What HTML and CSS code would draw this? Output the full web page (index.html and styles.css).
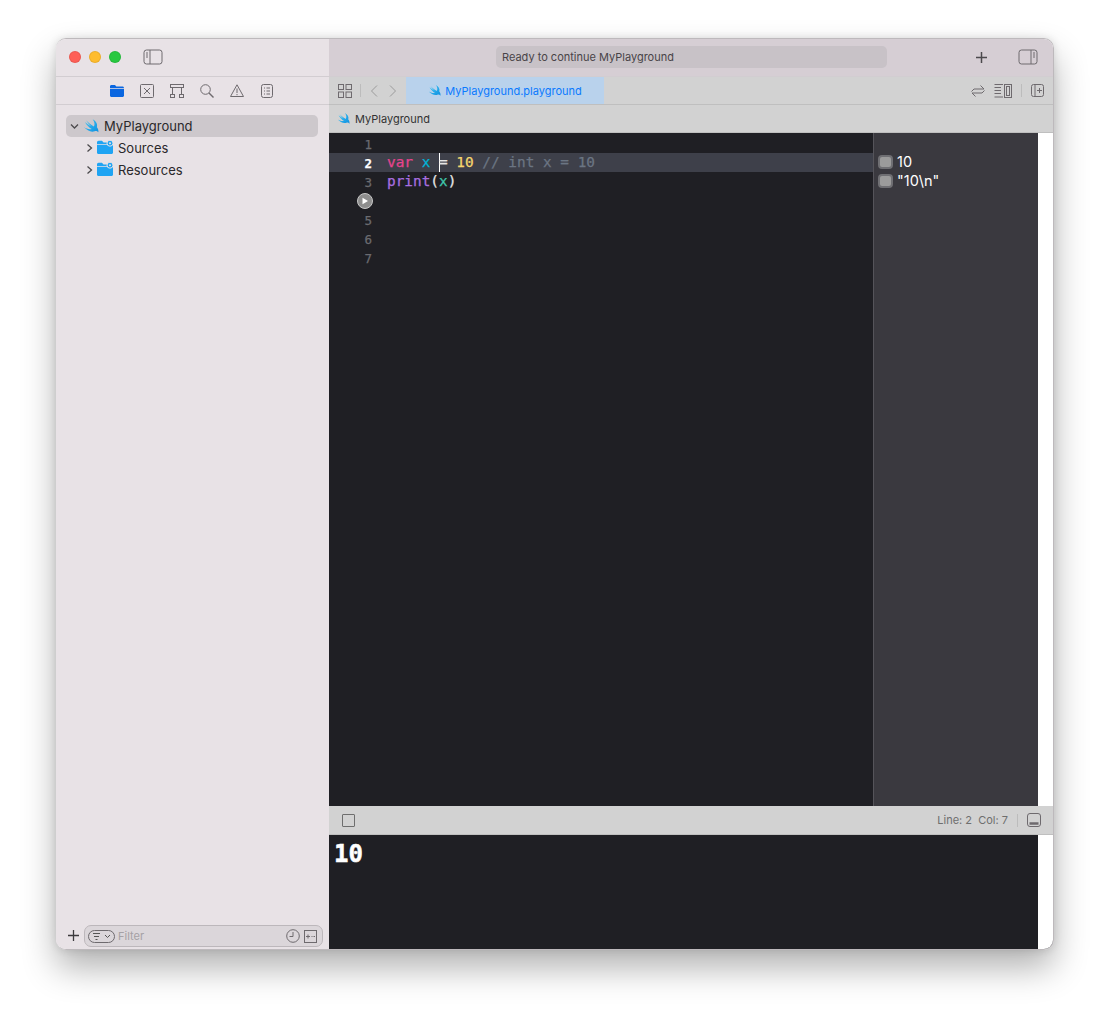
FILE: index.html
```html
<!DOCTYPE html>
<html lang="en">

<head>
    <meta charset="UTF-8">
    <meta name="viewport" content="width=device-width, initial-scale=1.0">
    <title>MyPlayground</title>
    <link rel="stylesheet" href="styles.css">
</head>

<body>
    <svg class="defs" width="0" height="0">
        <defs>
            <linearGradient id="swiftGrad" x1="0" y1="0" x2="1" y2="1">
                <stop offset="0" stop-color="#3fc8f5"></stop>
                <stop offset="1" stop-color="#0f8fe0"></stop>
            </linearGradient>
            <symbol id="swift" viewBox="0 0 24 24">
                <path fill="url(#swiftGrad)" d="M1 13.5C6 18.5 12 22 17.500 19.800C19.500 19 21.500 19.800 23 21.500C23.500 18.500 22.500 15.800 20.800 14C22.300 9 19.500 4.500 14.500 2C17.500 6 18 10 16.300 12.800C12.500 10.500 8 7 4.500 3.500C6.800 7 9.300 9.800 12 12.300C8.800 10.500 5.500 8.300 2.800 6C5.500 10.500 9 14.300 13 16.500C9 17.500 5 16 1 13.500Z"></path>
            </symbol>
            <symbol id="folder" viewBox="0 0 16 14">
                <path fill="#1fa4f3" d="M0 2.500C0 1.500.7.800 1.600.8H5L6.500 2.500H15C15.600 2.500 16 2.900 16 3.500V12.500C16 13.300 15.400 14 14.500 14H1.500C.6 14 0 13.300 0 12.500Z"></path>
                <path fill="#e8e2e6" d="M0 4.200H16V5H0Z"></path>
                <circle cx="13" cy="3.200" r="3" fill="#1fa4f3" stroke="#e8e2e6"></circle>
                <circle cx="13" cy="3.200" r="1" fill="#e8e2e6"></circle>
            </symbol>
        </defs>
    </svg>

    <div class="window">
        <aside class="sidebar">
            <div class="side-title">
                <span class="light red"></span>
                <span class="light amber"></span>
                <span class="light green"></span>
                <svg class="icon side-toggle" width="20" height="16" viewBox="0 0 20 16">
                    <rect x="1" y="1" width="18" height="14" rx="2.500"></rect>
                    <path d="M7 1V15M3 4H5M3 6H5M3 8H5"></path>
                </svg>
            </div>

            <nav class="side-nav">
                <svg class="nav-item" width="14" height="12" viewBox="0 0 14 12">
                    <path fill="#0a66e0" d="M0 1.500C0 .7.600 0 1.400 0H5L6.300 1.500H12.500C13.300 1.500 14 2.100 14 3V10.500C14 11.300 13.300 12 12.500 12H1.500C.7 12 0 11.300 0 10.500Z"></path>
                    <path fill="#e8e2e6" d="M0 3.300H14V4H0Z"></path>
                </svg>
                <svg class="icon nav-item" width="14" height="14" viewBox="0 0 14 14">
                    <rect x=".5" y=".5" width="13" height="13" rx="1"></rect>
                    <path d="M4 4L10 10M10 4L4 10"></path>
                </svg>
                <svg class="icon nav-item" width="14" height="14" viewBox="0 0 14 14">
                    <rect x=".5" y=".5" width="13" height="3"></rect>
                    <rect x=".5" y="10.500" width="4" height="3"></rect>
                    <rect x="9.500" y="10.500" width="4" height="3"></rect>
                    <path d="M2.500 3.500V10.500M11.500 3.500V10.500"></path>
                </svg>
                <svg class="icon nav-item" width="14" height="14" viewBox="0 0 14 14">
                    <circle cx="5.500" cy="5.500" r="4.800"></circle>
                    <path d="M9 9L13.500 13.500" stroke-width="1.400"></path>
                </svg>
                <svg class="icon nav-item" width="14" height="13" viewBox="0 0 14 13">
                    <path d="M7 .8L13.500 12.500H.5Z" stroke-linejoin="round"></path>
                    <path d="M7 4.500V9M7 10V11.200"></path>
                </svg>
                <svg class="icon nav-item" width="12" height="14" viewBox="0 0 12 14">
                    <rect x=".5" y=".5" width="11" height="13" rx="2"></rect>
                    <path d="M3 4H4M5.500 4H9M3 7H4M5.500 7H9M3 10H4M5.500 10H9"></path>
                </svg>
            </nav>

            <div class="tree">
                <div class="tree-row selected">
                    <svg class="chev" width="9" height="9" viewBox="0 0 9 9"><path d="M1 2.500L4.500 6L8 2.500"></path></svg>
                    <svg class="tree-swift" width="16" height="16"><use href="#swift"></use></svg>
                    <span>MyPlayground</span>
                </div>
                <div class="tree-row child">
                    <svg class="chev" width="9" height="10" viewBox="0 0 9 10"><path d="M2.500 1.500L6.500 5L2.500 8.500"></path></svg>
                    <svg class="tree-folder" width="16" height="14"><use href="#folder"></use></svg>
                    <span>Sources</span>
                </div>
                <div class="tree-row child">
                    <svg class="chev" width="9" height="10" viewBox="0 0 9 10"><path d="M2.500 1.500L6.500 5L2.500 8.500"></path></svg>
                    <svg class="tree-folder" width="16" height="14"><use href="#folder"></use></svg>
                    <span>Resources</span>
                </div>
            </div>

            <div class="side-foot">
                <svg class="foot-plus" width="11" height="11" viewBox="0 0 11 11"><path d="M5.500 0V11M0 5.500H11"></path></svg>
                <div class="filter">
                    <span class="filter-pill">
                        <svg class="icon" width="20" height="9" viewBox="0 0 20 9">
                            <path d="M1 1.500H8M2 4.500H7M3.500 7.500H5.500M13 3L15.500 5.500L18 3" stroke="#555"></path>
                        </svg>
                    </span>
                    <span class="filter-text">Filter</span>
                    <svg class="icon filter-clock" width="14" height="14" viewBox="0 0 14 14">
                        <circle cx="7" cy="7" r="6.300"></circle>
                        <path d="M7 3V7.500H3.500"></path>
                    </svg>
                    <svg class="icon filter-box" width="13" height="13" viewBox="0 0 13 13">
                        <rect x=".5" y=".5" width="12" height="12"></rect>
                        <path d="M2 6.500H6M4 4.500V8.500M7.500 6.500H8.500M9.500 6.500H11"></path>
                    </svg>
                </div>
            </div>
        </aside>

        <main class="main">
            <div class="main-title">
                <div class="status-pill">Ready to continue MyPlayground</div>
                <svg class="title-plus" width="11" height="11" viewBox="0 0 11 11"><path d="M5.500 0V11M0 5.500H11"></path></svg>
                <svg class="icon panel-toggle" width="20" height="16" viewBox="0 0 20 16">
                    <rect x="1" y="1" width="18" height="14" rx="2.500"></rect>
                    <path d="M13 1V15M15 4H17M15 6H17M15 8H17"></path>
                </svg>
            </div>

            <div class="tab-bar">
                <svg class="icon grid-btn" width="14" height="14" viewBox="0 0 14 14">
                    <rect x=".5" y=".5" width="5" height="5"></rect>
                    <rect x="8" y=".5" width="5.500" height="5"></rect>
                    <rect x=".5" y="8" width="5" height="5.500"></rect>
                    <rect x="8" y="8" width="5.500" height="5.500"></rect>
                </svg>
                <span class="vline"></span>
                <svg class="icon back-btn" width="8" height="12" viewBox="0 0 8 12"><path d="M7 .5L1.500 6L7 11.500"></path></svg>
                <svg class="icon fwd-btn" width="8" height="12" viewBox="0 0 8 12"><path d="M1 .5L6.500 6L1 11.500"></path></svg>
                <div class="tab">
                    <svg width="13" height="13"><use href="#swift"></use></svg>
                    <span>MyPlayground.playground</span>
                </div>
                <div class="tab-tools">
                    <svg class="icon" width="14" height="14" viewBox="0 0 14 14">
                        <path d="M.5 7.500L3 5H13L9.500 1.500M13.500 6.500L11 9H1L4.500 12.500"></path>
                    </svg>
                    <svg class="icon lines-btn" width="18" height="14" viewBox="0 0 18 14">
                        <path d="M.5 .5H9M.5 3.500H7M.5 6.500H7M.5 9.500H7M.5 13H9"></path>
                        <rect x="10.500" y=".5" width="7" height="13"></rect>
                        <rect x="12.500" y="2.500" width="3" height="9"></rect>
                    </svg>
                    <span class="vline"></span>
                    <svg class="icon" width="13" height="13" viewBox="0 0 13 13">
                        <rect x=".5" y=".5" width="12" height="12" rx="2"></rect>
                        <path d="M4 .5V12.500M8.500 4V9M6 6.500H11"></path>
                    </svg>
                </div>
            </div>

            <div class="jump-bar">
                <svg width="13" height="13"><use href="#swift"></use></svg>
                <span>MyPlayground</span>
            </div>

            <div class="work">
                <div class="editor">
                    <div class="code">
                        <div class="line"><span class="num">1</span></div>
                        <div class="line current"><span class="num">2</span><span class="src"><span class="kw">var</span> <span class="id">x</span> <span class="caret"></span>= <span class="lit">10</span> <span class="cmt">// int x = 10</span></span></div>
                        <div class="line"><span class="num">3</span><span class="src"><span class="fn">print</span>(<span class="ref">x</span>)</span></div>
                        <div class="line">
                            <span class="num run-cell">
                                <span class="run-btn"><svg width="8" height="8" viewBox="0 0 8 8"><path fill="#fff" d="M1.500 .8L7 4L1.500 7.200Z"></path></svg></span>
                            </span>
                        </div>
                        <div class="line"><span class="num">5</span></div>
                        <div class="line"><span class="num">6</span></div>
                        <div class="line"><span class="num">7</span></div>
                    </div>
                    <div class="results">
                        <div class="result"><span class="result-icon"></span><span>10</span></div>
                        <div class="result"><span class="result-icon"></span><span>"10\n"</span></div>
                    </div>
                    <div class="gutter"></div>
                </div>

                <div class="status-bar">
                    <span class="debug-box"></span>
                    <span class="position">Line: 2&nbsp; Col: 7</span>
                    <span class="vline"></span>
                    <svg class="icon console-btn" width="14" height="14" viewBox="0 0 14 14">
                        <rect x=".5" y=".5" width="13" height="13" rx="2.500"></rect>
                        <path d="M2.500 10.500H11.500" stroke-width="2.500"></path>
                    </svg>
                </div>

                <div class="console">
                    <div class="console-out">10</div>
                    <div class="gutter"></div>
                </div>
            </div>
        </main>
    </div>
</body>

</html>
```

FILE: styles.css
```css
* {
    box-sizing: border-box;
}

body {
    margin: 0;
    padding: 38px 0 0 56px;
    background: #fff;
    font-family: Inter, "Liberation Sans", sans-serif;
    height: 1024px;
    overflow: hidden;
}

.defs {
    display: block;
    height: 0;
}

svg {
    display: block;
    flex: none;
}

.icon {
    fill: none;
    stroke: #6e6a6e;
    stroke-width: 1;
}

.window {
    width: 998px;
    height: 912px;
    display: flex;
    border-radius: 10px;
    overflow: hidden;
    border: 1px solid #bdb9bc;
    border-width: 1px 1px 1px 0;
    box-shadow: 0 18px 34px rgba(0, 0, 0, 0.3), 0 0 8px rgba(0, 0, 0, 0.12);
}

/* sidebar */
.sidebar {
    width: 273px;
    flex: none;
    display: flex;
    flex-direction: column;
    background: #e8e2e6;
}

.side-title {
    height: 38px;
    border-bottom: 1px solid #d2cdd1;
    display: flex;
    align-items: center;
    padding: 0 0 1px 13px;
}

.light {
    width: 12px;
    height: 12px;
    border-radius: 50%;
    margin-right: 8px;
    box-shadow: inset 0 0 0 1px rgba(0, 0, 0, 0.08);
}

.red { background: #fe5f57; }
.amber { background: #febc2e; }
.green { background: #28c840; }

.side-toggle {
    margin-left: 14px;
}

.side-nav {
    height: 28px;
    border-bottom: 1px solid #d2cdd1;
    display: grid;
    grid-template-columns: repeat(6, 30px);
    padding-left: 46px;
    align-items: center;
    justify-items: center;
}

.tree {
    flex: 1;
    padding: 10px 11px 0 10px;
    font-size: 13px;
    color: #2a282b;
}

.tree-row {
    height: 22px;
    display: flex;
    align-items: center;
}

.selected {
    background: #cdc8cc;
    border-radius: 5px;
    padding-left: 4px;
}

.chev {
    fill: none;
    stroke: #4c4a4d;
    stroke-width: 1.300;
}

.tree-swift {
    margin: 0 5px 1px 4px;
}

.child {
    padding-left: 19px;
}

.tree-folder {
    margin: 0 5px 3px 3px;
}

.side-foot {
    height: 34px;
    display: flex;
    align-items: flex-start;
    padding: 10px 6px 0 12px;
}

.foot-plus {
    margin: 5px 5px 0 0;
    stroke: #3c3a3d;
    stroke-width: 1.300;
}

.filter {
    flex: 1;
    height: 22px;
    display: flex;
    align-items: center;
    background: #dbd6da;
    border: 1px solid #bcb7bb;
    border-radius: 7px;
    padding: 0 5px 0 3px;
    font-size: 11px;
}

.filter-pill {
    width: 27px;
    height: 13px;
    border: 1px solid #6e6a6e;
    border-radius: 7px;
    display: flex;
    align-items: center;
    justify-content: center;
}

.filter-text {
    flex: 1;
    margin-left: 3px;
    color: #a5a1a5;
}

.filter-clock {
    margin-right: 4px;
}

/* main column */
.main {
    flex: 1;
    min-width: 0;
    display: flex;
    flex-direction: column;
}

.main-title {
    height: 38px;
    background: #d6ced4;
    border-bottom: 1px solid #d2cdd1;
    display: flex;
    align-items: center;
    padding: 0 0 1px 167px;
}

.status-pill {
    width: 391px;
    height: 22px;
    line-height: 22px;
    padding-left: 6px;
    background: #c8c2c7;
    border-radius: 5px;
    font-size: 11px;
    color: #484448;
}

.title-plus {
    margin-left: 89px;
    stroke: #4c4a4d;
    stroke-width: 1.500;
}

.panel-toggle {
    margin-left: 31px;
}

.tab-bar {
    height: 28px;
    background: #d2d2d2;
    border-bottom: 1px solid #bfbfbf;
    display: flex;
    align-items: center;
    padding-left: 9px;
}

.vline {
    width: 1px;
    height: 13px;
    background: #bcbcbc;
    flex: none;
}

.tab-bar > .vline {
    margin-left: 8px;
}

.back-btn {
    margin-left: 9px;
    stroke: #9a9a9a;
}

.fwd-btn {
    margin-left: 11px;
    stroke: #9a9a9a;
}

.tab {
    width: 198px;
    height: 27px;
    margin-left: 9px;
    background: #b9d2ec;
    display: flex;
    align-items: center;
    justify-content: center;
    gap: 4px;
    font-size: 11px;
    color: #0a7aff;
}

.tab-tools {
    flex: 1;
    display: flex;
    align-items: center;
    justify-content: flex-end;
    gap: 9px;
    padding-right: 9px;
}

.jump-bar {
    height: 28px;
    background: #d2d2d2;
    border-bottom: 1px solid #bfbfbf;
    display: flex;
    align-items: center;
    gap: 5px;
    padding-left: 8px;
    font-size: 11px;
    color: #333;
}

.work {
    flex: 1;
    display: flex;
    flex-direction: column;
    min-height: 0;
}

.editor {
    height: 673px;
    display: flex;
    background: #1f1f24;
}

.code {
    width: 544px;
    padding-top: 1px;
    font-family: "DejaVu Sans Mono", "Liberation Mono", monospace;
    font-size: 14.400px;
    color: #e6e6e6;
    -webkit-text-stroke: 0.25px;
}

.line {
    height: 19px;
    line-height: 19px;
    display: flex;
}

.current {
    background: #3e404a;
}

.num {
    width: 43px;
    margin-right: 15px;
    padding-top: 2px;
    flex: none;
    font-size: 12.500px;
    color: #6b6b70;
    display: flex;
    justify-content: flex-end;
    align-items: center;
}

.run-cell {
    padding-top: 0;
}

.current .num {
    color: #fff;
    font-weight: bold;
}

.src {
    white-space: pre;
}

.kw { color: #e8448f; }
.id { color: #00b4d8; }
.lit { color: #f5d76e; }
.cmt { color: #6b7583; }
.fn { color: #a86ee0; }
.ref { color: #3fc7ac; }

.caret {
    display: inline-block;
    width: 0;
    height: 19px;
    vertical-align: top;
    border-left: 1px solid #fff;
    margin-right: -1px;
}

.run-btn {
    width: 16px;
    height: 16px;
    border-radius: 50%;
    background: #8e8e8e;
    border: 1px solid #c8c8c8;
    margin-right: -1px;
    display: flex;
    align-items: center;
    justify-content: center;
}

.results {
    width: 165px;
    padding: 19px 0 0 4px;
    background: #3a393f;
    border-left: 1px solid #55545a;
    font-size: 14.500px;
    color: #fff;
}

.result {
    height: 19px;
    display: flex;
    align-items: center;
    gap: 4px;
}

.result-icon {
    width: 15px;
    height: 14px;
    border-radius: 4px;
    background: #9b9b9b;
    border: 2px solid #6f6f73;
}

.gutter {
    flex: 1;
    background: #fff;
}

.status-bar {
    height: 29px;
    background: #d2d2d2;
    border-bottom: 1px solid #bfbfbf;
    display: flex;
    align-items: center;
    padding: 0 12px 0 13px;
}

.debug-box {
    width: 13px;
    height: 13px;
    border: 1px solid #6e6e6e;
    border-radius: 1px;
}

.position {
    margin-left: auto;
    margin-right: 9px;
    font-size: 11px;
    color: #6e6e6e;
}

.console-btn {
    margin-left: 9px;
}

.console {
    flex: 1;
    display: flex;
    background: #1f1f24;
}

.console-out {
    width: 709px;
    padding: 4px 0 0 5px;
    font-family: "DejaVu Sans Mono", "Liberation Mono", monospace;
    font-size: 24px;
    line-height: 30px;
    font-weight: bold;
    color: #fff;
    -webkit-text-stroke: 0.5px;
}
```
